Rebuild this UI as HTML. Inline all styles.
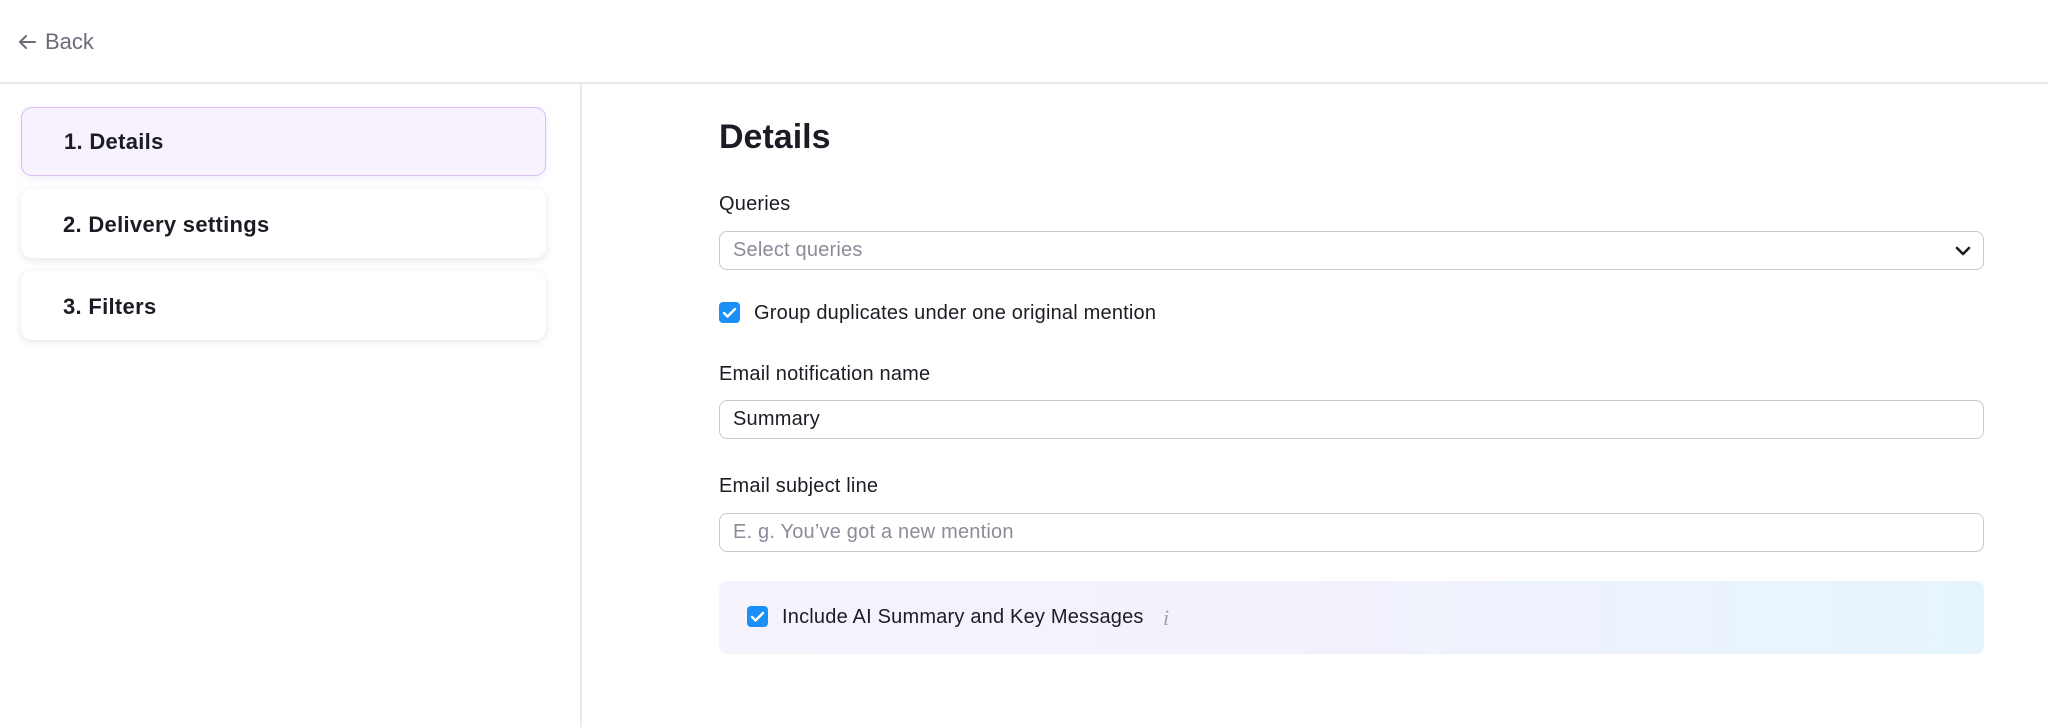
<!DOCTYPE html>
<html><head><meta charset="utf-8"><style>
*{box-sizing:border-box;margin:0;padding:0}
body{width:2048px;height:727px;background:#fff;font-family:"Liberation Sans",sans-serif;color:#1c1d24;position:relative;overflow:hidden}
.hdr{position:absolute;left:0;top:0;width:2048px;height:84px;border-bottom:2px solid #e6e6ec}
.back{position:absolute;left:17px;top:29px;font-size:22px;color:#6b6c7a;display:flex;align-items:center;gap:8px}
.div{position:absolute;left:580px;top:84px;width:2px;height:643px;background:#e8e8ee}
.card{position:absolute;left:21px;width:525px;height:69px;border-radius:11px;background:#fff;box-shadow:0 2px 8px rgba(40,40,80,.12);font-weight:bold;font-size:22px;letter-spacing:.3px;padding-left:42px;line-height:71px}
.card.act{background:#f7f2fe;border:1.5px solid #d9bbf7;box-shadow:0 2px 8px rgba(120,80,200,.10);line-height:68px}
h1{position:absolute;left:719px;top:118px;font-size:34px;font-weight:bold}
.lbl{position:absolute;left:719px;font-size:20px;letter-spacing:.2px}
.inp{position:absolute;left:719px;width:1265px;height:39px;border:1.5px solid #c8c8d0;border-radius:8px;font-size:20px;letter-spacing:.2px;padding-left:13px;line-height:37px}
.ph{color:#8a8c9a}
.cb{position:absolute;width:21px;height:21px;background:#1b8ff5;border-radius:4px}
.cb svg{position:absolute;left:3px;top:4px}
.ai{position:absolute;left:719px;top:581px;width:1265px;height:73px;border-radius:8px;background:linear-gradient(90deg,#f7f3fd 0%,#f1f1fc 50%,#e6f5fd 100%)}
</style></head><body>
<div class="hdr"><div class="back"><svg width="20" height="18" viewBox="0 0 20 18"><path d="M18 9H3M9 3L3 9l6 6" fill="none" stroke="#6b6c7a" stroke-width="2" stroke-linecap="round" stroke-linejoin="round"/></svg>Back</div></div>
<div class="div"></div>
<div class="card act" style="top:107px">1. Details</div>
<div class="card" style="top:189px">2. Delivery settings</div>
<div class="card" style="top:271px">3. Filters</div>
<h1>Details</h1>
<div class="lbl" style="top:193px">Queries</div>
<div class="inp" style="top:231px"><span class="ph">Select queries</span>
<svg style="position:absolute;right:12px;top:14px" width="16" height="10" viewBox="0 0 16 10"><path d="M2 2l6 6 6-6" fill="none" stroke="#1c1d24" stroke-width="2.6" stroke-linecap="round" stroke-linejoin="round"/></svg></div>
<div class="cb" style="left:719px;top:302px"><svg width="15" height="13" viewBox="0 0 15 13"><path d="M2 7l3.5 3.5L13 3" fill="none" stroke="#fff" stroke-width="2.4" stroke-linecap="round" stroke-linejoin="round"/></svg></div>
<div class="lbl" style="left:754px;top:302px">Group duplicates under one original mention</div>
<div class="lbl" style="top:363px">Email notification name</div>
<div class="inp" style="top:400px">Summary</div>
<div class="lbl" style="top:475px">Email subject line</div>
<div class="inp" style="top:513px"><span class="ph">E. g. You’ve got a new mention</span></div>
<div class="ai"></div>
<div class="cb" style="left:747px;top:606px"><svg width="15" height="13" viewBox="0 0 15 13"><path d="M2 7l3.5 3.5L13 3" fill="none" stroke="#fff" stroke-width="2.4" stroke-linecap="round" stroke-linejoin="round"/></svg></div>
<div class="lbl" style="left:782px;top:606px">Include AI Summary and Key Messages</div>
<div class="lbl" style="left:1163px;top:605px;color:#a0a2ae;font-style:italic;font-family:'Liberation Serif',serif;font-size:22px">i</div>
</body></html>
